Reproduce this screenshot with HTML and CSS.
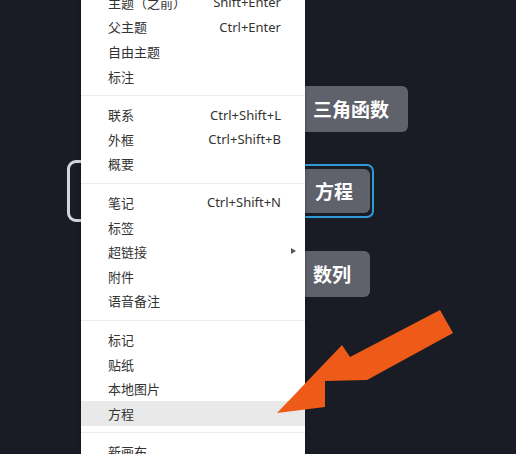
FILE: index.html
```html
<!DOCTYPE html>
<html lang="zh-CN">
<head>
    <meta charset="UTF-8">
    <meta name="viewport" content="width=device-width, initial-scale=1.0">
    <title>右键菜单 - 方程</title>
    <link rel="stylesheet" href="styles.css">
</head>
<body>
    <div class="canvas">
        <!-- 画布上的节点 -->
        <div class="bracket"></div>
        <div class="node node-trig">三角函数</div>
        <div class="node-frame">
            <div class="node node-eq">方程</div>
        </div>
        <div class="node node-seq">数列</div>

        <!-- 右键菜单 -->
        <ul class="menu">
            <li class="item"><span>主题（之前）</span><span class="key">Shift+Enter</span></li>
            <li class="item"><span>父主题</span><span class="key">Ctrl+Enter</span></li>
            <li class="item"><span>自由主题</span></li>
            <li class="item"><span>标注</span></li>
            <li class="sep"></li>
            <li class="item"><span>联系</span><span class="key">Ctrl+Shift+L</span></li>
            <li class="item"><span>外框</span><span class="key">Ctrl+Shift+B</span></li>
            <li class="item"><span>概要</span></li>
            <li class="sep"></li>
            <li class="item"><span>笔记</span><span class="key">Ctrl+Shift+N</span></li>
            <li class="item"><span>标签</span></li>
            <li class="item has-sub"><span>超链接</span></li>
            <li class="item"><span>附件</span></li>
            <li class="item"><span>语音备注</span></li>
            <li class="sep"></li>
            <li class="item"><span>标记</span></li>
            <li class="item"><span>贴纸</span></li>
            <li class="item"><span>本地图片</span></li>
            <li class="item active"><span>方程</span></li>
            <li class="sep"></li>
            <li class="item"><span>新画布</span></li>
        </ul>

        <!-- 提示箭头，压在菜单上 -->
        <svg class="arrow" width="516" height="454" viewBox="0 0 516 454">
            <polygon points="277,413 342,345 350,357 440,310 453,333 367,380 325,381 325,407" fill="#ee5a17"/>
        </svg>
    </div>
</body>
</html>
```

FILE: styles.css
```css
/* 深色画布 + 白色右键菜单 */
body {
    margin: 0;
    background-color: #1a1c25;
    font-family: "Noto Sans CJK SC", "Noto Sans", sans-serif;
    overflow: hidden;
}
.canvas {
    position: relative;
    width: 516px;
    height: 454px;
    overflow: hidden;
}
.bracket {
    position: absolute;
    left: 67px;
    top: 160px;
    width: 60px;
    height: 56px;
    border: 3px solid #d4d5db;
    border-radius: 9px;
}
.node {
    position: absolute;
    background-color: #5f616b;
    color: #fff;
    font-weight: bold;
    font-size: 19px;
    line-height: 46px;
    height: 46px;
    padding-left: 23px;
    border-radius: 6px;
    box-sizing: border-box;
}
.node-trig {
    left: 290px;
    top: 86px;
    width: 118px;
}
.node-frame {
    position: absolute;
    left: 280px;
    top: 164px;
    width: 94px;
    height: 54px;
    border: 2px solid #2f9ad8;
    border-radius: 7px;
    box-sizing: border-box;
}
.node-eq {
    left: 8px;
    top: 3px;
    width: 80px;
    height: 44px;
    line-height: 44px;
    padding-left: 25px;
}
.node-seq {
    left: 290px;
    top: 251px;
    width: 80px;
    height: 46px;
}
.arrow {
    position: absolute;
    left: 0;
    top: 0;
}
.menu {
    position: absolute;
    left: 81px;
    top: -10px;
    width: 224px;
    margin: 0;
    padding: 0;
    list-style: none;
    background-color: #fff;
    box-shadow: 0 0 4px rgba(0, 0, 0, 0.3);
    font-size: 13px;
    color: #333;
}
.item {
    display: flex;
    justify-content: space-between;
    align-items: center;
    height: 24.6px;
    padding: 0 24px 0 27px;
    position: relative;
}
.key {
    font-family: "Noto Sans", sans-serif;
    font-size: 13px;
    color: #333;
}
.item.active {
    background-color: #e9e9e9;
}
.has-sub::after {
    content: "";
    position: absolute;
    right: 9px;
    top: 9px;
    border-left: 5px solid #555;
    border-top: 3.5px solid transparent;
    border-bottom: 3.5px solid transparent;
}
.sep {
    height: 1px;
    margin: 6.5px 0;
    background-color: #ebebeb;
}
```
